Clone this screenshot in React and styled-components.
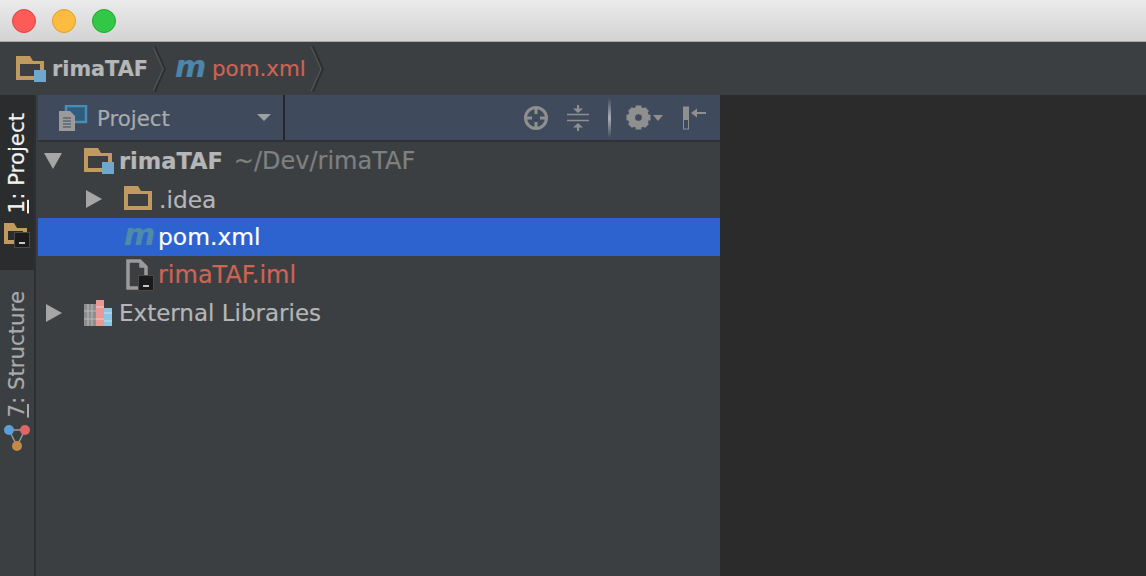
import React from "react";
import styled, { createGlobalStyle } from "styled-components";

const GlobalStyle = createGlobalStyle`
  html, body { margin: 0; padding: 0; height: 100%; overflow: hidden; background: #3c3f41; }
  #root { height: 100%; }
`;

const FolderIcon = ({ badge }) => (
  <svg width="30" height="26" viewBox="0 0 30 26">
    <path fillRule="evenodd" d="M0 0H14L17 5H28V24H0zM4 8V20H24V8z" fill="#c09a5e" />
    {badge && <rect x="18" y="14" width="12" height="12" fill="#6fa8cc" />}
  </svg>
);

const TerminalBadge = () => (
  <>
    <rect x="0.5" y="0.5" width="15" height="15" fill="#1b1b1b" stroke="#4a4a4a" />
    <rect x="5" y="10" width="6" height="2" fill="#c8c8c8" />
  </>
);

const SideFolderIcon = () => (
  <svg width="26" height="26" viewBox="0 0 26 26">
    <path fillRule="evenodd" d="M0 0H10L13 5H23V21H0zM4 8V17H19V8z" fill="#c09a5e" />
    <g transform="translate(10,9)"><TerminalBadge /></g>
  </svg>
);

const FileIcon = () => (
  <svg width="30" height="32" viewBox="0 0 30 32">
    <path d="M2 2h12l6 6v21H2z" fill="none" stroke="#9a9a9a" strokeWidth="3.500" />
    <path d="M14 2v6h6" fill="#9a9a9a" stroke="#9a9a9a" strokeWidth="1.500" />
    <g transform="translate(12,16)"><TerminalBadge /></g>
  </svg>
);

const LibraryIcon = () => (
  <svg width="28" height="26" viewBox="0 0 28 26">
    <rect x="0" y="4" width="12" height="22" fill="#8e8e8e" />
    <path d="M0 11h12M0 19h12M4 4v22M8 4v22" stroke="#b8b8b8" strokeWidth="1" />
    <rect x="12" y="0" width="8" height="26" fill="#ea9a96" />
    <path d="M12 7h8M12 19h8" stroke="#f6c6c2" strokeWidth="1" />
    <rect x="20" y="8" width="8" height="18" fill="#8cc4e6" />
    <path d="M20 13h8M20 21h8" stroke="#c6e2f4" strokeWidth="1" />
  </svg>
);

const ProjectViewIcon = () => (
  <svg width="30" height="26" viewBox="0 0 30 26">
    <rect x="8" y="1" width="20" height="16" fill="#2f5d7e" stroke="#4a8cb4" strokeWidth="2.500" />
    <path d="M1 6h11l5 5v15H1z" fill="#9b9b9b" />
    <path d="M5 13h8M5 16h8M5 19h8M5 22h8" stroke="#3f4b5e" strokeWidth="1" />
  </svg>
);

const LocateIcon = () => (
  <svg width="26" height="26" viewBox="0 0 26 26">
    <circle cx="13" cy="13" r="10.500" fill="none" stroke="#8f8f8f" strokeWidth="3" />
    <path d="M13 2v7M13 17v7M2 13h7M17 13h7" stroke="#8f8f8f" strokeWidth="3" />
  </svg>
);

const CollapseIcon = () => (
  <svg width="24" height="28" viewBox="0 0 24 28">
    <path d="M1 10.500h22M1 16.500h22" stroke="#8f8f8f" strokeWidth="1.500" />
    <path d="M12 1v5M12 22v5" stroke="#8f8f8f" strokeWidth="2" />
    <path d="M7 4.500h10l-5 4.500zM7 23.500h10l-5-4.500z" fill="#8f8f8f" />
  </svg>
);

const GearIcon = () => {
  const teeth = [0, 45, 90, 135];
  return (
    <svg width="25" height="25" viewBox="0 0 26 26">
      {teeth.map((angle) => (
        <rect key={angle} x="10" y="0.500" width="6" height="25" fill="#8f8f8f" transform={`rotate(${angle} 13 13)`} />
      ))}
      <circle cx="13" cy="13" r="8.500" fill="none" stroke="#8f8f8f" strokeWidth="5" />
      <circle cx="13" cy="13" r="3.500" fill="#3f4b5e" />
    </svg>
  );
};

const HideIcon = () => (
  <svg width="24" height="24" viewBox="0 0 24 24">
    <rect x="1.500" y="1" width="5" height="22" fill="none" stroke="#8f8f8f" strokeWidth="1" />
    <rect x="1" y="1" width="6" height="13" fill="#8f8f8f" />
    <path d="M12 7h12" stroke="#8f8f8f" strokeWidth="2" />
    <path d="M9 7l6-4.500v9z" fill="#8f8f8f" />
  </svg>
);

const StructureIcon = () => (
  <svg width="26" height="26" viewBox="0 0 26 26">
    <path d="M5 5h16M5 5l8 16M21 5l-8 16" stroke="#9a9a9a" strokeWidth="1.500" fill="none" />
    <circle cx="5" cy="5" r="5" fill="#5a9fd8" />
    <circle cx="21" cy="5" r="5" fill="#e06666" />
    <circle cx="13" cy="21" r="5" fill="#c48a45" />
  </svg>
);

const Page = styled.div`
  height: 576px;
  width: 1146px;
  display: flex;
  flex-direction: column;
  font-family: "DejaVu Sans", sans-serif;
  background: #3c3f41;
  -webkit-text-stroke: 0.2px;
`;

const TitleBar = styled.div`
  height: 41px;
  display: flex;
  align-items: center;
  gap: 16px;
  padding-left: 12px;
  background: linear-gradient(#ebebeb, #d3d3d3);
  border-bottom: 1px solid #a9a9a9;
  flex-shrink: 0;
`;

const Light = styled.span`
  width: 24px;
  height: 24px;
  border-radius: 50%;
  box-sizing: border-box;
  background: ${(p) => p.$color};
  border: 1px solid ${(p) => p.$edge};
`;

const NavBar = styled.div`
  height: 53px;
  display: flex;
  align-items: center;
  flex-shrink: 0;
  padding-left: 16px;
  background: #3c3f41;
`;

const Crumb = styled.div`
  display: flex;
  align-items: center;
  font-size: ${(p) => p.$size}px;
  font-weight: ${(p) => (p.$bold ? 700 : 400)};
  color: ${(p) => (p.$red ? "#cf6355" : "#b4b6b8")};
`;

const CrumbIcon = styled.span`
  width: ${(p) => p.$width}px;
  display: flex;
  align-items: center;
  flex-shrink: 0;
`;

const Chevron = styled.svg`
  width: 14px;
  height: 46px;
  margin: 0 8px 0 5px;
`;

const MavenMark = styled.span`
  display: block;
  font-size: 30px;
  line-height: 30px;
  font-weight: 700;
  font-style: italic;
  letter-spacing: -1px;
  color: ${(p) => p.$color};
  transform: translateY(-2px);
`;

const Main = styled.div`
  flex: 1;
  display: flex;
  min-height: 0;
`;

const SideStrip = styled.div`
  width: 34px;
  display: flex;
  flex-direction: column;
  flex-shrink: 0;
  border-right: 2px solid #2d2f30;
  margin-right: 2px;
`;

const SideTab = styled.div`
  height: ${(p) => p.$height}px;
  display: flex;
  flex-direction: column;
  align-items: center;
  box-sizing: border-box;
  padding-top: ${(p) => p.$top}px;
  background: ${(p) => (p.$active ? "#2a2c2d" : "transparent")};
  color: ${(p) => (p.$active ? "#f2f2f2" : "#a9abad")};
`;

const SideLabel = styled.span`
  writing-mode: vertical-rl;
  transform: rotate(180deg);
  font-size: 21.300px;
  line-height: 34px;
  white-space: nowrap;
  margin-bottom: ${(p) => p.$gap}px;

  u {
    text-decoration-thickness: 2px;
    text-underline-offset: -1px;
  }
`;

const Panel = styled.div`
  width: 682px;
  flex-shrink: 0;
  display: flex;
  flex-direction: column;
  background: #3c3f41;
`;

const PanelHeader = styled.div`
  height: 47px;
  box-sizing: border-box;
  display: flex;
  align-items: center;
  background: #3f4a5c;
  border-bottom: 2px solid #2f3338;
  flex-shrink: 0;
`;

const ViewSelect = styled.div`
  width: 247px;
  height: 100%;
  box-sizing: border-box;
  display: flex;
  align-items: center;
  padding-left: 20px;
  gap: 9px;
  border-right: 2px solid #23272c;
  font-size: 21.300px;
  color: #a9abad;
`;

const ViewLabel = styled.span`
  padding-top: 2px;
`;

const Caret = styled.span`
  margin-left: auto;
  margin-right: 12px;
  width: 0;
  height: 0;
  border-left: 7px solid transparent;
  border-right: 7px solid transparent;
  border-top: 7px solid #a0a0a0;
`;

const Tools = styled.div`
  flex: 1;
  display: flex;
  align-items: center;
  justify-content: flex-end;
  padding-right: 14px;
`;

const ToolGap = styled.span`
  width: ${(p) => p.$width}px;
`;

const Separator = styled.span`
  width: 3px;
  height: 40px;
  margin: 0 15px 0 18px;
  background: linear-gradient(transparent, #a8adb5 50%, transparent);
`;

const SmallCaret = styled.span`
  width: 0;
  height: 0;
  margin: 0 19px 0 2px;
  border-left: 5px solid transparent;
  border-right: 5px solid transparent;
  border-top: 6px solid #8f8f8f;
`;

const Tree = styled.div`
  display: flex;
  flex-direction: column;
`;

const Row = styled.div`
  height: 38px;
  display: flex;
  align-items: center;
  box-sizing: border-box;
  padding-left: ${(p) => p.$indent}px;
  background: ${(p) => (p.$selected ? "#2d63cf" : "transparent")};
  font-size: ${(p) => p.$size}px;
  white-space: nowrap;
  color: ${(p) => (p.$selected ? "#ffffff" : p.$red ? "#cf6355" : "#b4b6b8")};
  font-weight: ${(p) => (p.$bold ? 700 : 400)};
`;

const Arrow = styled.span`
  width: 0;
  height: 0;
  margin-right: 22px;
  ${(p) =>
    p.$open
      ? `border-left: 9px solid transparent; border-right: 9px solid transparent; border-top: 16px solid #a6a6a6;`
      : `border-top: 9px solid transparent; border-bottom: 9px solid transparent; border-left: 16px solid #a6a6a6;`}
`;

const IconSlot = styled.span`
  width: ${(p) => p.$width}px;
  display: flex;
  align-items: center;
  flex-shrink: 0;
`;

const Hint = styled.span`
  margin-left: 11px;
  font-size: 24px;
  font-weight: 400;
  color: #7e8082;
`;

const Editor = styled.div`
  flex: 1;
  background: #2b2b2b;
`;

const ChevronMark = () => (
  <Chevron viewBox="0 0 14 46">
    <path d="M2 0l10 23L2 46" fill="none" stroke="#2b2d2e" strokeWidth="1.500" />
    <path d="M0 1l10 22L0 45" fill="none" stroke="#55585a" strokeWidth="1" />
  </Chevron>
);

export default function App() {
  return (
    <Page>
      <GlobalStyle />
      <TitleBar>
        <Light $color="#fc5b57" $edge="#e0443e" />
        <Light $color="#fdbc40" $edge="#dea123" />
        <Light $color="#33c748" $edge="#1daa2c" />
      </TitleBar>
      <NavBar>
        <Crumb $bold $size={20.8}>
          <CrumbIcon $width={36}><FolderIcon badge /></CrumbIcon>
          rimaTAF
        </Crumb>
        <ChevronMark />
        <Crumb $red $size={21.4}>
          <CrumbIcon $width={37}><MavenMark $color="#4b86ad">m</MavenMark></CrumbIcon>
          pom.xml
        </Crumb>
        <ChevronMark />
      </NavBar>
      <Main>
        <SideStrip>
          <SideTab $active $height={175} $top={18}>
            <SideLabel $gap={10}><u>1</u>: Project</SideLabel>
            <SideFolderIcon />
          </SideTab>
          <SideTab $height={200} $top={21}>
            <SideLabel $gap={7}><u>7</u>: Structure</SideLabel>
            <StructureIcon />
          </SideTab>
        </SideStrip>
        <Panel>
          <PanelHeader>
            <ViewSelect>
              <ProjectViewIcon />
              <ViewLabel>Project</ViewLabel>
              <Caret />
            </ViewSelect>
            <Tools>
              <LocateIcon />
              <ToolGap $width={17} />
              <CollapseIcon />
              <Separator />
              <GearIcon />
              <SmallCaret />
              <HideIcon />
            </Tools>
          </PanelHeader>
          <Tree>
            <Row $indent={6} $bold $size={22.5}>
              <Arrow $open />
              <IconSlot $width={35}><FolderIcon badge /></IconSlot>
              rimaTAF
              <Hint>~/Dev/rimaTAF</Hint>
            </Row>
            <Row $indent={48} $size={23.3}>
              <Arrow />
              <IconSlot $width={35}><FolderIcon /></IconSlot>
              .idea
            </Row>
            <Row $selected $indent={86} $size={23.4}>
              <IconSlot $width={34}><MavenMark $color="#4f8aa8">m</MavenMark></IconSlot>
              pom.xml
            </Row>
            <Row $red $indent={88} $size={24}>
              <IconSlot $width={32}><FileIcon /></IconSlot>
              rimaTAF.iml
            </Row>
            <Row $indent={8} $size={23}>
              <Arrow />
              <IconSlot $width={35}><LibraryIcon /></IconSlot>
              External Libraries
            </Row>
          </Tree>
        </Panel>
        <Editor />
      </Main>
    </Page>
  );
}
